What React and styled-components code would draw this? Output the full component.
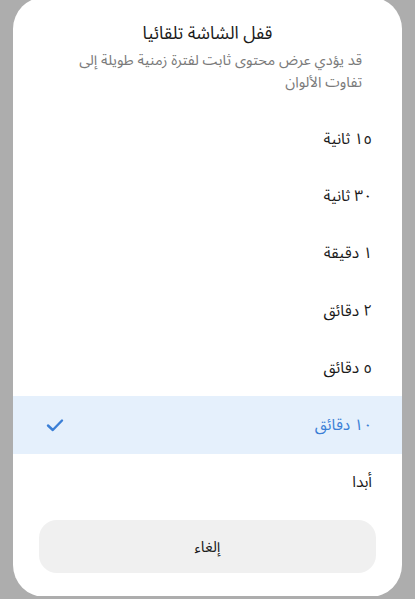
import React, { useState } from "react";
import styled, { createGlobalStyle } from "styled-components";

const GlobalStyle = createGlobalStyle`
  html, body {
    margin: 0;
    padding: 0;
    background: #adadad;
    overflow: hidden;
  }
  body {
    font-family: "Noto Sans Arabic", "DejaVu Sans", sans-serif;
  }
`;

const options = ["١٥ ثانية", "٣٠ ثانية", "١ دقيقة", "٢ دقائق", "٥ دقائق", "١٠ دقائق", "أبدا"];

const App = () => {
  const [selected, setSelected] = useState(5);

  return (
    <>
      <GlobalStyle />
      <Page>
        <Sheet dir="rtl">
          <Header>
            <Title>قفل الشاشة تلقائيا</Title>
            <Subtitle>
              قد يؤدي عرض محتوى ثابت لفترة زمنية طويلة إلى
              <br />
              تفاوت الألوان
            </Subtitle>
          </Header>
          <List>
            {options.map((label, i) => (
              <Option key={i} $active={i === selected} onClick={() => setSelected(i)}>
                <span>{label}</span>
                {i === selected && (
                  <svg width="18" height="14" viewBox="0 0 18 14">
                    <path
                      d="M2 7.5 L6.8 12 L16 2.5"
                      fill="none"
                      stroke="#3b7fd6"
                      strokeWidth="2.4"
                      strokeLinecap="round"
                      strokeLinejoin="round"
                    />
                  </svg>
                )}
              </Option>
            ))}
          </List>
          <CancelBtn type="button">إلغاء</CancelBtn>
        </Sheet>
      </Page>
    </>
  );
};

export default App;

const Page = styled.div`
  width: 415px;
  height: 599px;
  padding: 0 13px;
  box-sizing: border-box;
`;

const Sheet = styled.div`
  margin-top: -3px;
  height: 600px;
  background: #fff;
  border-radius: 32px;
  overflow: hidden;
  display: flex;
  flex-direction: column;
`;

const Header = styled.div`
  padding: 25px 40px 16px;
  display: flex;
  flex-direction: column;
  gap: 4px;
`;

const Title = styled.div`
  text-align: center;
  font-size: 17.5px;
  line-height: 24px;
  color: #1a1a1a;
`;

const Subtitle = styled.div`
  text-align: right;
  font-size: 14.6px;
  line-height: 22px;
  color: #7a7a7a;
`;

const List = styled.div`
  display: flex;
  flex-direction: column;
`;

const Option = styled.div`
  height: 57.3px;
  display: flex;
  align-items: center;
  justify-content: space-between;
  padding: 0 30px 0 33px;
  font-size: 15.5px;
  color: ${(p) => (p.$active ? "#3b7fd6" : "#1a1a1a")};
  background: ${(p) => (p.$active ? "#e5f0fc" : "transparent")};
  cursor: pointer;
`;

const CancelBtn = styled.button`
  margin: 9px 26px 0;
  height: 53px;
  border: none;
  border-radius: 18px;
  background: #f0f0f0;
  font-family: inherit;
  font-size: 15px;
  color: #1a1a1a;
`;
